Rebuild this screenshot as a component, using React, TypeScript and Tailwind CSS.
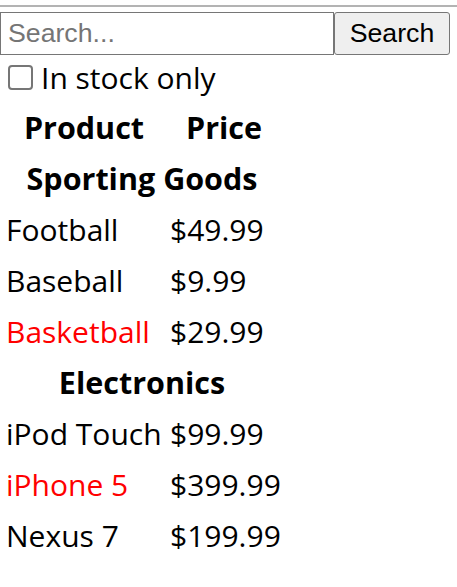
const products = [
  { category: "Sporting Goods", price: "$49.99", stocked: true, name: "Football" },
  { category: "Sporting Goods", price: "$9.99", stocked: true, name: "Baseball" },
  { category: "Sporting Goods", price: "$29.99", stocked: false, name: "Basketball" },
  { category: "Electronics", price: "$99.99", stocked: true, name: "iPod Touch" },
  { category: "Electronics", price: "$399.99", stocked: false, name: "iPhone 5" },
  { category: "Electronics", price: "$199.99", stocked: true, name: "Nexus 7" },
]

function SearchBar() {
  return (
    <form>
      <div className="flex pt-[5px]">
        <input
          type="text"
          placeholder="Search..."
          className="w-[334px] h-[43px] border border-[#767676] px-[7px] text-[26.7px] text-black placeholder:text-[#757575] outline-none"
          style={{ fontFamily: "'Liberation Sans', Arial, sans-serif" }}
        />
        <button
          type="button"
          className="w-[116px] h-[43px] border border-[#767676] rounded-[3px] bg-[#efefef] text-[26.7px] text-black"
          style={{ fontFamily: "'Liberation Sans', Arial, sans-serif" }}
        >
          Search
        </button>
      </div>
      <label className="flex items-center h-[45px]">
        <span className="ml-2 mr-2 w-[25px] h-[25px] rounded-[4px] border-2 border-[#767676] bg-white" />
        <span>In stock only</span>
      </label>
    </form>
  )
}

function ProductTable() {
  const rows: React.ReactNode[] = []
  let last = ""
  products.forEach((p) => {
    if (p.category !== last) {
      rows.push(
        <div key={p.category} className="col-span-2 h-[47px] flex items-center justify-center font-bold text-[30.5px]">
          {p.category}
        </div>
      )
      last = p.category
    }
    rows.push(
      <div key={p.name} className={`h-[47px] flex items-center px-0.5 ${p.stocked ? "" : "text-[#ff0000]"}`}>
        {p.name}
      </div>,
      <div key={p.name + "-price"} className="h-[47px] flex items-center px-0.5">
        {p.price}
      </div>
    )
  })
  return (
    <div className="grid grid-cols-[160px_112px] gap-1 pl-1 pt-1 whitespace-nowrap">
      <div className="h-[47px] flex items-center justify-center font-bold text-[30.5px]">Product</div>
      <div className="h-[47px] flex items-center justify-center font-bold text-[30.5px]">Price</div>
      {rows}
    </div>
  )
}

export default function App() {
  return (
    <div className="min-h-screen bg-white text-black text-[30px] leading-none" style={{ fontFamily: "'Open Sans', sans-serif" }}>
      <div className="h-[7px] border-b-2 border-[#b3b3b3]" />
      <SearchBar />
      <ProductTable />
    </div>
  )
}
